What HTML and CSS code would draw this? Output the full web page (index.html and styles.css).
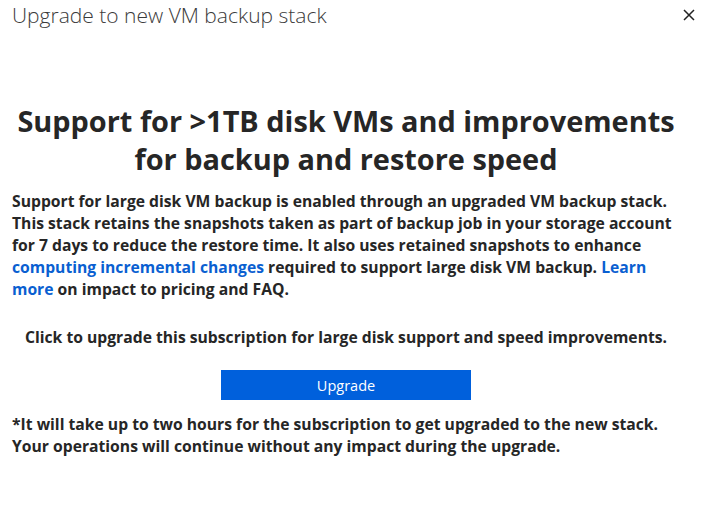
FILE: index.html
```html
<!DOCTYPE html>
<html lang="en">
  <head>
    <meta charset="UTF-8" />
    <title>Upgrade to new VM backup stack</title>
    <link rel="stylesheet" href="styles.css">
  </head>
  <body>
    <div class="blade">
      <header class="blade-header">
        <h2 class="blade-title">Upgrade to new VM backup stack</h2>
        <button class="close" type="button" aria-label="Close">
          <svg width="12" height="12" viewBox="0 0 12 12">
            <path d="M1 1 L11 11 M11 1 L1 11" stroke="#222" stroke-width="1.5" fill="none" />
          </svg>
        </button>
      </header>

      <main class="content">
        <h1>Support for &gt;1TB disk VMs and improvements for backup and restore speed</h1>
        <p class="intro">
          Support for large disk VM backup is enabled through an upgraded VM backup stack.
          This stack retains the snapshots taken as part of backup job in your storage account
          for 7 days to reduce the restore time. It also uses retained snapshots to enhance
          <a href="#">computing incremental changes</a> required to support large disk VM backup.
          <a href="#">Learn more</a> on impact to pricing and FAQ.
        </p>
        <p class="cta">Click to upgrade this subscription for large disk support and speed improvements.</p>
        <button class="upgrade" type="button">Upgrade</button>
        <p class="note">
          *It will take up to two hours for the subscription to get upgraded to the new stack.
          Your operations will continue without any impact during the upgrade.
        </p>
      </main>
    </div>
  </body>
</html>
```

FILE: styles.css
```css
* {
  box-sizing: border-box;
}
body {
  margin: 0;
  font-family: "Open Sans", "Noto Sans", sans-serif;
  color: #262626;
  background: #ffffff;
}
.blade {
  width: 709px;
  height: 508px;
}
.blade-header {
  display: flex;
  justify-content: space-between;
  align-items: center;
  padding: 0 14px 0 12px;
  height: 30px;
}
.blade-title {
  margin: 0;
  font-weight: 300;
  font-size: 21px;
  color: #3b3b3b;
}
.close {
  border: none;
  background: none;
  padding: 0;
  display: flex;
}
.content {
  width: 680px;
  padding: 72px 0 0 12px;
}
h1 {
  margin: 0 0 12px;
  text-align: center;
  font-size: 28.9px;
  line-height: 38px;
  font-weight: 700;
  color: #262626;
}
.intro,
.cta,
.note {
  margin: 0;
  font-size: 15.7px;
  line-height: 22px;
  font-weight: 700;
}
.intro a {
  color: #0a5fd1;
  text-decoration: none;
}
.cta {
  margin-top: 26px;
  text-align: center;
}
.upgrade {
  display: block;
  margin: 22px auto 0;
  width: 250px;
  height: 30px;
  border: none;
  background: #0060dc;
  color: #ffffff;
  font-family: inherit;
  font-size: 14.5px;
  cursor: pointer;
}
.note {
  margin-top: 13px;
}
```
